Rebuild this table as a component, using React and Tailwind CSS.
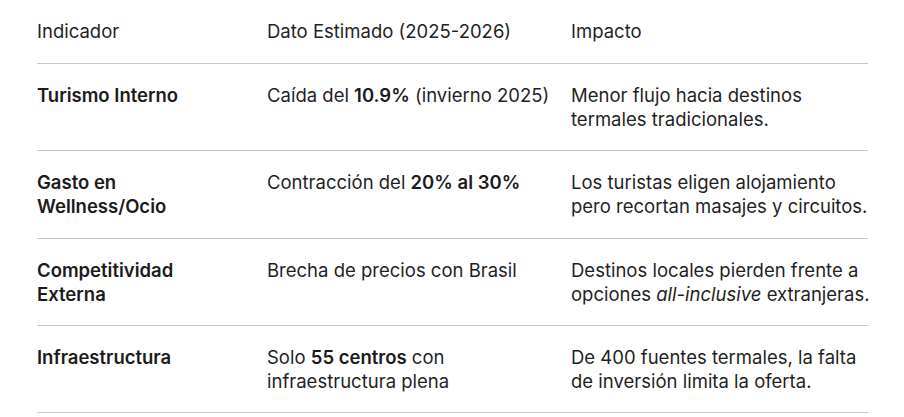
export default function App() {
  const B = ({ children }) => <b className="font-semibold text-[#1b1b1b]">{children}</b>;
  const rows = [
    {
      a: "Turismo Interno",
      b: (
        <>
          Caída del <B>10.9%</B> (invierno 2025)
        </>
      ),
      c: "Menor flujo hacia destinos termales tradicionales.",
    },
    {
      a: "Gasto en Wellness/Ocio",
      b: (
        <>
          Contracción del <B>20% al 30%</B>
        </>
      ),
      c: "Los turistas eligen alojamiento pero recortan masajes y circuitos.",
    },
    {
      a: "Competitividad Externa",
      b: "Brecha de precios con Brasil",
      c: (
        <>
          Destinos locales pierden frente a opciones <i>all-inclusive</i> extranjeras.
        </>
      ),
    },
    {
      a: "Infraestructura",
      b: (
        <>
          Solo <B>55 centros</B> con infraestructura plena
        </>
      ),
      c: "De 400 fuentes termales, la falta de inversión limita la oferta.",
    },
  ];
  return (
    <div
      className="w-[904px] h-[417px] bg-white text-[#1f1f1f] overflow-hidden"
      style={{ fontFamily: "Inter, Roboto, 'Liberation Sans', sans-serif" }}
    >
      <div className="ml-[37px] w-[831px] text-[18.5px] leading-[24px]">
        <div className="grid grid-cols-[230px_304px_297px] border-b border-[#c7c7c7]">
          <div className="pt-[19px] pb-[20px] pr-4">Indicador</div>
          <div className="pt-[19px] pb-[20px] pr-4">Dato Estimado (2025-2026)</div>
          <div className="pt-[19px] pb-[20px]">Impacto</div>
        </div>
        {rows.map((r, i) => (
          <div
            key={i}
            className="grid grid-cols-[230px_304px_297px] border-b border-[#c7c7c7]"
          >
            <div className="pt-[19px] pb-[19.3px] pr-[30px] font-semibold text-[#1b1b1b]">{r.a}</div>
            <div className="pt-[19px] pb-[19.3px] pr-[18px]">{r.b}</div>
            <div className="pt-[19px] pb-[19.3px] -mr-[6px]">{r.c}</div>
          </div>
        ))}
      </div>
    </div>
  );
}
